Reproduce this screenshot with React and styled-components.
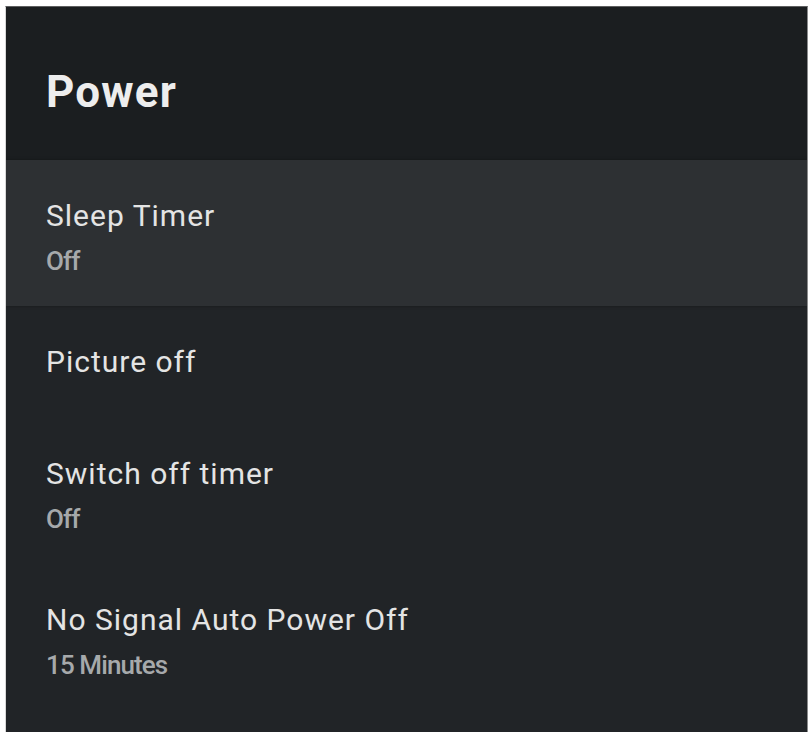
import React from "react";
import styled, { createGlobalStyle } from "styled-components";

const Global = createGlobalStyle`
  html, body { margin: 0; padding: 0; background: #ffffff; height: 100%; }
  #root { height: 100%; }
  * { box-sizing: border-box; }
`;

const Page = styled.div`
  height: 732px;
  padding: 6px 1px 0 5px;
  background: #ffffff;
  display: flex;
`;

const Panel = styled.div`
  flex: 1;
  display: flex;
  flex-direction: column;
  background: #212427;
  border-top: 1px solid #5e5f60;
  border-left: 1px solid #d8d8d8;
  border-right: 1px solid #8a8b8c;
  font-family: Roboto, "Liberation Sans", sans-serif;
  overflow: hidden;
`;

const Header = styled.div`
  height: 153px;
  background: #1b1e20;
  padding: 59px 40px 0;
`;

const Title = styled.h1`
  margin: 0;
  font-size: 44px;
  line-height: 52px;
  font-weight: 700;
  letter-spacing: 1.2px;
  color: #ededed;
`;

const List = styled.div`
  display: flex;
  flex-direction: column;
`;

const Row = styled.div`
  display: flex;
  flex-direction: column;
  padding: 38px 40px ${(p) => (p.$sub ? "30px" : "38px")};
  background: ${(p) => (p.$selected ? "#2d3033" : "transparent")};
  box-shadow: ${(p) =>
    p.$selected ? "0 0 3px rgba(0,0,0,0.35)" : "none"};
`;

const Label = styled.div`
  font-size: 30px;
  line-height: 36px;
  font-weight: 400;
  letter-spacing: 1px;
  color: #e4e4e4;
`;

const Value = styled.div`
  margin-top: 12px;
  font-size: 26px;
  line-height: 30px;
  font-weight: 500;
  letter-spacing: -0.9px;
  color: #a6a9ab;
`;

const items = [
  { label: "Sleep Timer", value: "Off", selected: true },
  { label: "Picture off" },
  { label: "Switch off timer", value: "Off" },
  { label: "No Signal Auto Power Off", value: "15 Minutes" },
];

export default function App() {
  return (
    <>
      <Global />
      <Page>
        <Panel>
          <Header>
            <Title>Power</Title>
          </Header>
          <List>
            {items.map((it) => (
              <Row key={it.label} $selected={it.selected} $sub={!!it.value}>
                <Label>{it.label}</Label>
                {it.value && <Value>{it.value}</Value>}
              </Row>
            ))}
          </List>
        </Panel>
      </Page>
    </>
  );
}
